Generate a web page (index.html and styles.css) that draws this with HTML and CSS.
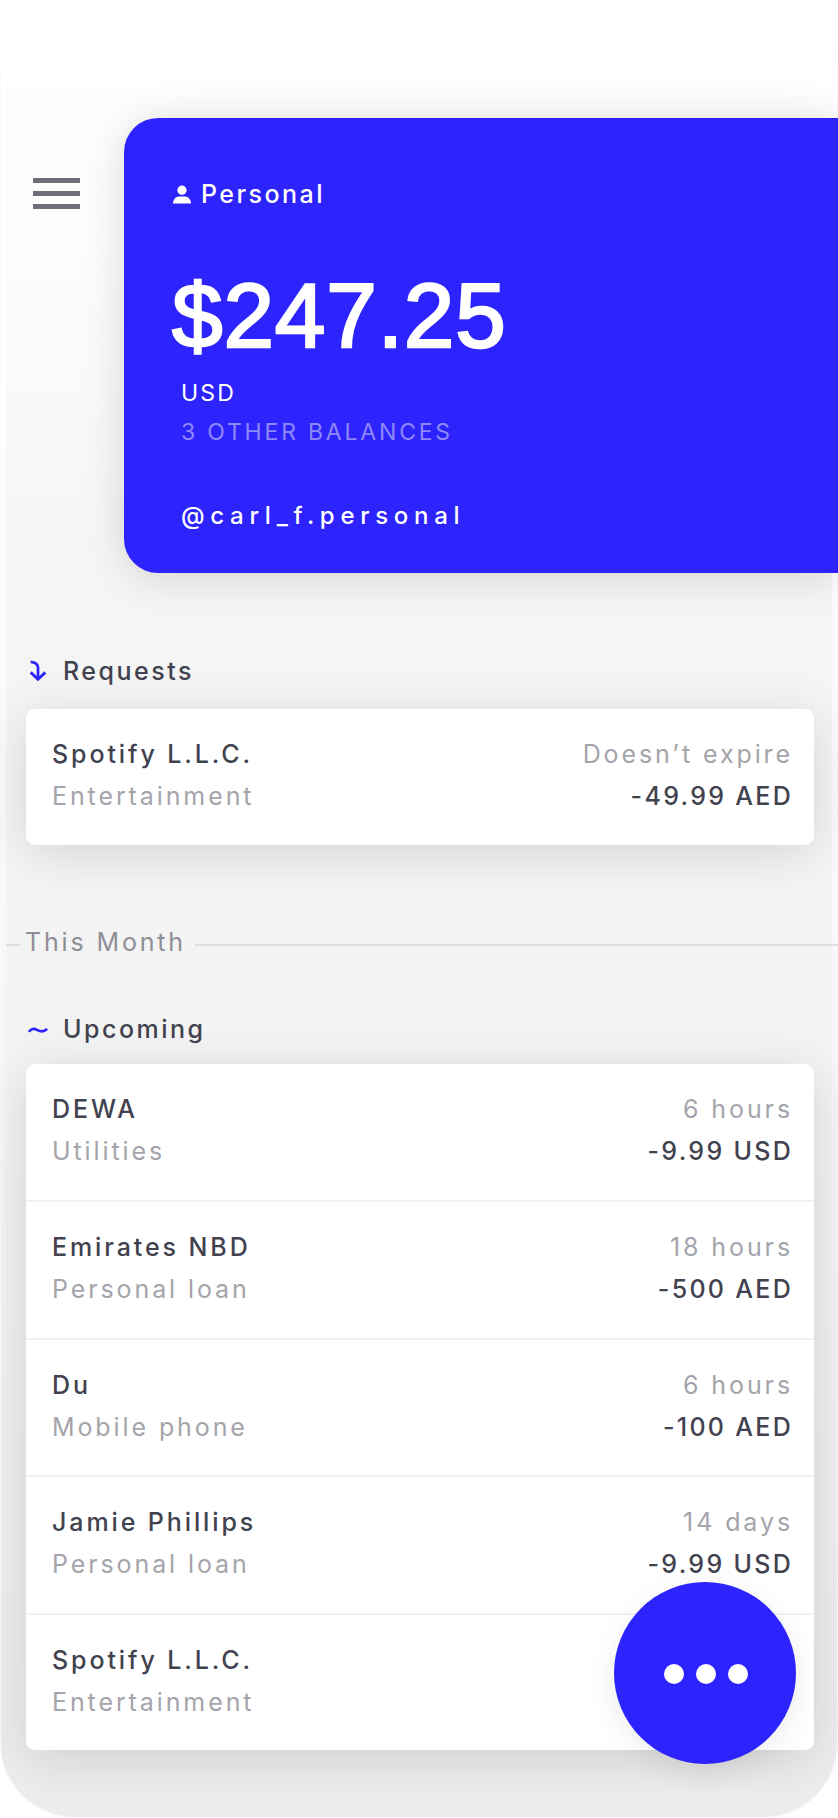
FILE: index.html
```html
<!DOCTYPE html>
<html lang="en">
<head>
<meta charset="utf-8">
<title>Wallet</title>
<link rel="stylesheet" href="styles.css">
</head>
<body>
<main class="phone">
  <section class="hero">
    <button class="menu" aria-label="Menu"><span></span><span></span><span></span></button>
    <div class="balance-card">
      <div class="account">
        <svg class="person" viewBox="0 0 20 20" aria-hidden="true"><circle cx="10" cy="5.2" r="4.6"/><path d="M1 18.5c0-4.2 3-7 6-7h6c3 0 6 2.800 6 7z"/></svg>
        <span>Personal</span>
      </div>
      <div class="amount">$247.25</div>
      <div class="currency">USD</div>
      <div class="others">3 OTHER BALANCES</div>
      <div class="handle">@carl_f.personal</div>
    </div>
  </section>

  <h2 class="heading heading-requests">
    <svg class="heading-icon" viewBox="0 0 24 24" aria-hidden="true"><path d="M4 2c5 .5 8 2.500 8 6.500V21M4 13.500 12 21l8-7.500"/></svg>
    Requests
  </h2>
  <div class="card">
    <div class="row">
      <div class="col"><div class="name">Spotify L.L.C.</div><div class="sub">Entertainment</div></div>
      <div class="col col-right"><div class="sub">Doesn’t expire</div><div class="value">-49.99 AED</div></div>
    </div>
  </div>

  <div class="divider"><span class="divider-stub"></span><span class="divider-label">This Month</span><span class="divider-line"></span></div>

  <h2 class="heading heading-upcoming">
    <svg class="heading-icon" viewBox="0 0 24 24" aria-hidden="true"><path d="M2 15c4-5 7-3 10-1.500s6 2 10-1.500"/></svg>
    Upcoming
  </h2>
  <div class="card">
    <div class="row">
      <div class="col"><div class="name">DEWA</div><div class="sub">Utilities</div></div>
      <div class="col col-right"><div class="sub">6 hours</div><div class="value">-9.99 USD</div></div>
    </div>
    <div class="row">
      <div class="col"><div class="name">Emirates NBD</div><div class="sub">Personal loan</div></div>
      <div class="col col-right"><div class="sub">18 hours</div><div class="value">-500 AED</div></div>
    </div>
    <div class="row">
      <div class="col"><div class="name">Du</div><div class="sub">Mobile phone</div></div>
      <div class="col col-right"><div class="sub">6 hours</div><div class="value">-100 AED</div></div>
    </div>
    <div class="row">
      <div class="col"><div class="name">Jamie Phillips</div><div class="sub">Personal loan</div></div>
      <div class="col col-right"><div class="sub">14 days</div><div class="value">-9.99 USD</div></div>
    </div>
    <div class="row">
      <div class="col"><div class="name">Spotify L.L.C.</div><div class="sub">Entertainment</div></div>
    </div>
  </div>

  <button class="fab" aria-label="More"><span></span><span></span><span></span></button>
</main>
</body>
</html>
```
FILE: styles.css
```css
* { box-sizing: border-box; }
html, body { margin: 0; padding: 0; background: #fff; }
body { width: 838px; height: 1818px; overflow: hidden; font-family: "Inter", "Liberation Sans", sans-serif; }

.phone {
  position: relative;
  width: 838px;
  height: 1818px;
  padding-top: 118px;
  border-radius: 75px;
  overflow: hidden;
  box-shadow: inset 0 0 0 1px #fafafa;
  background:
    linear-gradient(#fefefe 0, #fcfcfc 180px, #f5f5f5 480px, #f3f3f3 1000px, #ececec 1733px) no-repeat 6px 85px / 826px 1733px,
    linear-gradient(#fff 0, #fff 300px, #fafafa 800px, #ebebeb 1818px);
}

.hero { display: flex; align-items: flex-start; }
.menu {
  width: 124px;
  flex: none;
  margin-top: 60px;
  padding: 0 0 0 33px;
  border: 0;
  background: none;
  display: flex;
  flex-direction: column;
  gap: 8px;
}
.menu span { display: block; width: 47px; height: 5px; background: #6e6e79; }

.balance-card {
  flex: 1;
  height: 455px;
  padding: 60px 0 0 48px;
  background: #2d24fd;
  border-radius: 34px 0 0 34px;
  color: #fff;
  box-shadow: 0 4px 44px rgba(0, 0, 0, .14);
}
.account { display: flex; align-items: center; gap: 9px; font-size: 25px; line-height: 32px; letter-spacing: 2.45px; font-weight: 500; }
.person { width: 20px; height: 20px; fill: #fff; margin-top: 2px; }
.amount { margin-top: 51px; font-family: "Liberation Sans", sans-serif; font-size: 91px; line-height: 110px; font-weight: 400; -webkit-text-stroke: 2.4px #fff; letter-spacing: .8px; }
.currency { margin: 6px 0 0 9px; font-size: 23px; line-height: 32px; letter-spacing: 2.2px; }
.others { margin: 7px 0 0 9px; font-size: 23px; line-height: 32px; letter-spacing: 2.8px; color: #8d88f9; }
.handle { margin: 52px 0 0 9px; font-size: 24px; line-height: 32px; letter-spacing: 5.7px; font-weight: 500; }

.heading {
  display: flex;
  align-items: center;
  margin: 0 0 0 27px;
  height: 32px;
  font-size: 25px;
  line-height: 32px;
  font-weight: 500;
  letter-spacing: 2.5px;
  color: #42424f;
}
.heading-requests { margin-top: 82px; margin-bottom: 22px; }
.heading-upcoming { margin-top: 53px; margin-bottom: 19px; }
.heading-icon {
  width: 22px;
  height: 22px;
  margin-right: 14px;
  fill: none;
  stroke: #2d24fd;
  stroke-width: 3;
}

.card {
  margin: 0 24px 0 26px;
  background: #fff;
  border-radius: 9px;
  box-shadow: 0 8px 50px rgba(0, 0, 0, .13);
}
.row {
  display: flex;
  justify-content: space-between;
  height: 137.500px;
  padding: 24px 21px 0 26px;
  border-top: 2px solid #f1f1f1;
}
.row:first-child { border-top: 0; height: 136px; }
.name, .sub { font-size: 25px; line-height: 42px; letter-spacing: 2.9px; }
.value { font-size: 25px; line-height: 42px; letter-spacing: 2.3px; }
.name { color: #42424f; font-weight: 500; }
.value { color: #42424f; font-weight: 500; }
.sub { color: #a4a4ab; }
.col-right { text-align: right; }

.divider { display: flex; align-items: center; margin: 79px 0 0 6px; height: 36px; }
.divider-stub { width: 14px; height: 2px; background: #dedede; margin-top: 6px; }
.divider-label { margin: 0 9px 0 5px; font-size: 25px; line-height: 36px; letter-spacing: 2.85px; color: #8e8e96; }
.divider-line { flex: 1; height: 2px; background: #dedede; margin-top: 6px; }

.fab {
  position: absolute;
  left: 614px;
  top: 1582px;
  width: 182px;
  height: 182px;
  padding: 2px 0 0 2px;
  border: 0;
  border-radius: 50%;
  background: #2d24fd;
  box-shadow: 0 8px 30px rgba(0, 0, 0, .08);
  display: flex;
  align-items: center;
  justify-content: center;
  gap: 12px;
}
.fab span { width: 20px; height: 20px; border-radius: 50%; background: #fff; }
```
